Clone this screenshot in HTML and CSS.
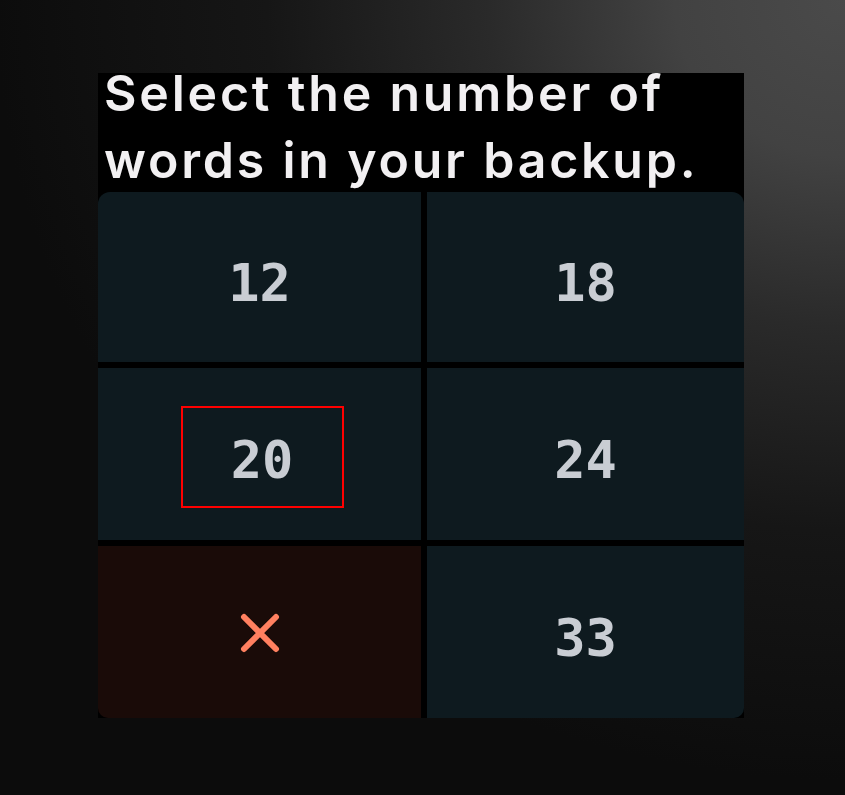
FILE: index.html
```html
<!DOCTYPE html>
<html>
<head>
<meta charset="utf-8">
<link rel="stylesheet" href="styles.css">
</head>
<body>
<div class="screen">
  <div class="title">Select the number of<br>words in your backup.</div>
  <div class="grid">
    <div class="cell tl"><span class="num">12</span></div>
    <div class="cell tr"><span class="num">18</span></div>
    <div class="cell"><div class="marked"><span class="num">20</span></div></div>
    <div class="cell"><span class="num">24</span></div>
    <div class="cell cancel bl">
      <svg class="x" width="44" height="42" viewBox="0 0 44 42"><path d="M6 5 L38 37 M38 5 L6 37" stroke="#ff8060" stroke-width="6" stroke-linecap="round" fill="none"/></svg>
    </div>
    <div class="cell br"><span class="num">33</span></div>
  </div>
</div>
</body>
</html>
```
FILE: styles.css
```css
html, body {
  margin: 0;
  padding: 0;
}
body {
  width: 845px;
  height: 795px;
  overflow: hidden;
  background: radial-gradient(ellipse 850px 780px at 100% 0%, #4a4a4a 0%, #424242 20%, #2a2a2a 42%, #161616 68%, #0c0c0c 100%);
  font-family: "Inter", "Liberation Sans", sans-serif;
}
.screen {
  margin-left: 98px;
  margin-top: 73px;
  width: 646px;
  background: #000;
  display: flex;
  flex-direction: column;
}
.title {
  margin-top: -13px;
  height: 132px;
  padding-left: 6px;
  color: #f2f0f2;
  font-size: 50px;
  font-weight: 600;
  line-height: 67px;
  letter-spacing: 2.8px;
  white-space: nowrap;
}
.grid {
  display: grid;
  grid-template-columns: 323px 317px;
  grid-template-rows: 170px 172px 172px;
  column-gap: 6px;
  row-gap: 6px;
}
.cell {
  background: #0e1a1f;
  display: flex;
  align-items: center;
  justify-content: center;
  padding-top: 6px;
}
.tl { border-top-left-radius: 12px; }
.tr { border-top-right-radius: 12px; }
.bl { border-bottom-left-radius: 10px; }
.br { border-bottom-right-radius: 10px; }
.cancel {
  background: #1a0b08;
  padding-top: 2px;
}
.num {
  font-family: "DejaVu Sans Mono", "Liberation Mono", monospace;
  font-size: 52px;
  font-weight: bold;
  color: #c9cdd3;
  padding-top: 5px;
}
.marked {
  width: 159px;
  height: 98px;
  border: 2px solid #ff0000;
  display: flex;
  align-items: center;
  justify-content: center;
  margin-left: 5px;
}
.x {
  display: block;
}
```
